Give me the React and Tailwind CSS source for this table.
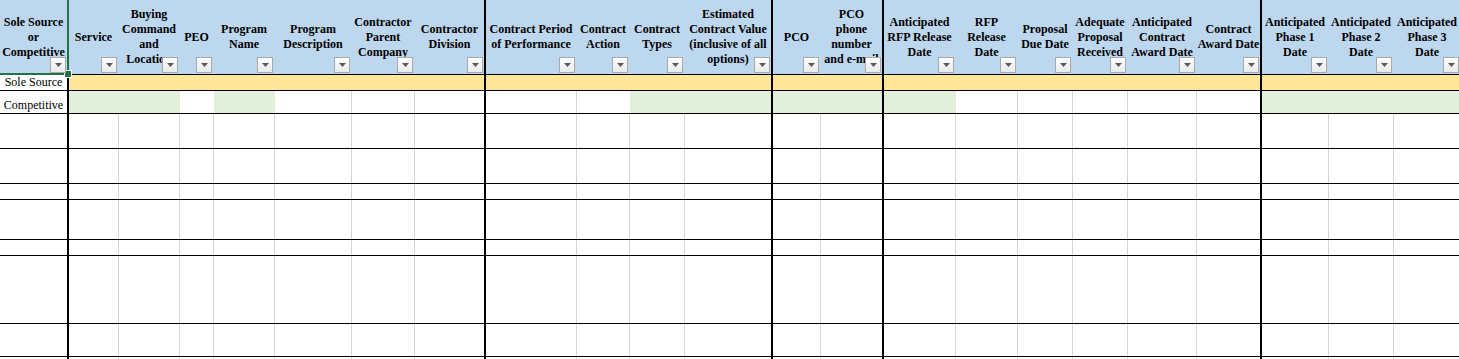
const columns = [
  { w: "w-[69px]", thick: true, head: ["Sole Source", "or", "Competitive"] },
  { w: "w-[50px]", head: ["Service"] },
  { w: "w-[61px]", head: ["Buying", "Command", "and", "Location"] },
  { w: "w-[34px]", head: ["PEO"] },
  { w: "w-[61px]", head: ["Program", "Name"] },
  { w: "w-[77px]", head: ["Program", "Description"] },
  { w: "w-[63px]", head: ["Contractor", "Parent", "Company"] },
  { w: "w-[71px]", thick: true, head: ["Contractor", "Division"] },
  { w: "w-[91px]", head: ["Contract Period", "of Performance"] },
  { w: "w-[53px]", head: ["Contract", "Action"] },
  { w: "w-[55px]", head: ["Contract", "Types"] },
  { w: "w-[88px]", thick: true, head: ["Estimated", "Contract Value", "(inclusive of all", "options)"] },
  { w: "w-[48px]", head: ["PCO"] },
  { w: "w-[63px]", thick: true, head: ["PCO", "phone", "number", "and e-mail"] },
  { w: "w-[72px]", head: ["Anticipated", "RFP Release", "Date"] },
  { w: "w-[62px]", head: ["RFP", "Release", "Date"] },
  { w: "w-[55px]", head: ["Proposal", "Due Date"] },
  { w: "w-[55px]", head: ["Adequate", "Proposal", "Received"] },
  { w: "w-[69px]", head: ["Anticipated", "Contract", "Award Date"] },
  { w: "w-[65px]", thick: true, head: ["Contract", "Award Date"] },
  { w: "w-[67px]", head: ["Anticipated", "Phase 1", "Date"] },
  { w: "w-[65px]", head: ["Anticipated", "Phase 2", "Date"] },
  { w: "w-[67px]", head: ["Anticipated", "Phase 3", "Date"] },
];

// fill pattern of the "Competitive" row, g = green
const competitiveFill = "wggwgwwwwwgggggwwwwwggg".split("");

const bodyHeights = ["h-[35px]", "h-[35px]", "h-[16px]", "h-[40px]", "h-[16px]", "h-[68px]", "h-[33px]", "h-[40px]"];

const FilterButton = () => (
  <div className="absolute right-[1px] bottom-[1px] z-10 w-[16px] h-[16px] border border-[#a9a9a9] bg-gradient-to-b from-white to-[#e9e9e9] flex items-center justify-center">
    <svg width="7" height="4" viewBox="0 0 7 4">
      <polygon points="0,0 7,0 3.5,4" fill="#5a5a5a" />
    </svg>
  </div>
);

const edge = (col, gray) =>
  col.thick ? "border-r-2 border-black" : gray ? "border-r border-[#d4d4d4]" : "border-r border-transparent";

const App = () => {
  return (
    <div className="relative w-[1459px] h-[359px] overflow-hidden bg-white text-black font-[family-name:Liberation_Serif,Times_New_Roman,serif]">
      {/* Header */}
      <div className="flex h-[75px] border-b border-black bg-[#bdd7ee]">
        {columns.map((col, i) => (
          <div
            key={i}
            className={`relative shrink-0 h-full ${col.w} ${edge(col, false)} flex flex-col items-center justify-center text-center text-[12px] leading-[15px] font-bold`}
          >
            {col.head.map((line, j) => (
              <span key={j} className="whitespace-nowrap">{line}</span>
            ))}
            <FilterButton />
          </div>
        ))}
      </div>

      {/* Sole Source */}
      <div className="flex h-[16px] border-b border-black">
        {columns.map((col, i) => (
          <div
            key={i}
            className={`shrink-0 h-full ${col.w} ${edge(col, false)} ${i === 0 ? "bg-white flex items-center justify-center text-[12px] leading-[15px]" : "bg-[#ffe699]"}`}
          >
            {i === 0 && <span className="whitespace-nowrap">Sole Source</span>}
          </div>
        ))}
      </div>

      {/* Competitive */}
      <div className="flex h-[23px] border-b border-black">
        {columns.map((col, i) => {
          const green = competitiveFill[i] === "g";
          const nextWhite = competitiveFill[i + 1] !== "g";
          return (
            <div
              key={i}
              className={`shrink-0 h-full ${col.w} ${edge(col, !green && nextWhite)} ${green ? "bg-[#e2efda]" : "bg-white"} ${i === 0 ? "flex items-end justify-center text-[12px] leading-[15px]" : ""}`}
            >
              {i === 0 && <span className="whitespace-nowrap">Competitive</span>}
            </div>
          );
        })}
      </div>

      {/* Empty rows */}
      {bodyHeights.map((h, r) => (
        <div key={r} className={`flex ${h} border-b border-black`}>
          {columns.map((col, i) => (
            <div key={i} className={`shrink-0 h-full ${col.w} ${edge(col, true)}`} />
          ))}
        </div>
      ))}

      {/* Selected cell A1 */}
      <div className="absolute left-[-2px] top-[-2px] w-[71px] h-[77px] border-2 border-[#217346] pointer-events-none" />
      <div className="absolute left-[65px] top-[71px] w-[6px] h-[6px] bg-[#217346] outline outline-1 outline-white" />
    </div>
  );
};

export default App;
